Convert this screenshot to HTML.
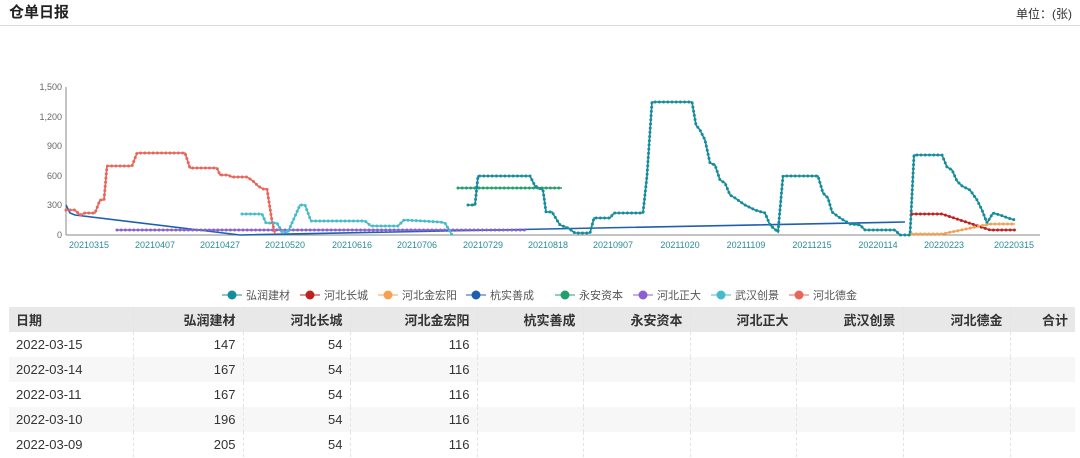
<!DOCTYPE html><html><head><meta charset="utf-8"><style>
body{margin:0;width:1080px;height:458px;overflow:hidden;background:#fff;font-family:"Liberation Sans","Noto Sans CJK SC",sans-serif;color:#333;position:relative}
.t{position:absolute;left:9px;top:1px;font-size:15px;font-weight:bold;color:#222}
.u{position:absolute;right:8px;top:5px;font-size:12px;color:#333}
.hr{position:absolute;left:0;top:25px;width:1080px;height:1px;background:#ddd}
svg{position:absolute;left:0;top:0}
table{position:absolute;left:9px;top:307px;border-collapse:collapse;font-size:13px}
td{height:25px;padding:0 7px;border-left:1px dashed #e3e3e3;text-align:right;box-sizing:border-box}
td:first-child{text-align:left;border-left:none}
tr.h td{background:#e8e8e8;font-weight:bold}
tr:nth-child(odd):not(.h) td{background:#f7f7f7}
.d polyline{stroke-dasharray:0 4.2;stroke-linecap:round;stroke-width:3}
</style></head><body>
<div class="t">仓单日报</div><div class="u">单位：(张)</div><div class="hr"></div>
<svg width="1080" height="305" font-family="Liberation Sans,Noto Sans CJK SC,sans-serif">
<g font-size="9" fill="#666" text-anchor="end">
<text x="62" y="90">1,500</text><text x="62" y="120">1,200</text><text x="62" y="149">900</text><text x="62" y="179">600</text><text x="62" y="208">300</text><text x="62" y="238">0</text></g>
<line x1="66" y1="87" x2="66" y2="235" stroke="#888"/><line x1="66" y1="235" x2="1040" y2="235" stroke="#888"/>
<g font-size="9" fill="#2a8a9a" text-anchor="middle">
<text x="89" y="248">20210315</text><text x="155" y="248">20210407</text><text x="220" y="248">20210427</text><text x="285" y="248">20210520</text><text x="352" y="248">20210616</text><text x="417" y="248">20210706</text><text x="483" y="248">20210729</text><text x="548" y="248">20210818</text><text x="613" y="248">20210907</text><text x="680" y="248">20211020</text><text x="746" y="248">20211109</text><text x="812" y="248">20211215</text><text x="878" y="248">20220114</text><text x="944" y="248">20220223</text><text x="1014" y="248">20220315</text></g>
<defs>
<polyline id="p1" points="117,230 525,230"/>
<polyline id="p2" points="66,205 70,213 75,215 240,235 905,222"/>
<polyline id="p3" points="66,210 75,210 80,215 85,213 95,213 100,200 104,200 107,166 132,166 137,153 185,153 190,168 217,168 220,175 228,175 232,177 247,177 253,181 258,186 263,189 267,189 272,221 275,234"/>
<polyline id="p4" points="242,214 262,214 266,223 277,223 282,232 288,232 300,205 305,205 311,221 365,221 371,226 398,226 404,220 440,222 445,223 452,235"/>
<polyline id="p5" points="458,188 562,188"/>
<polyline id="p6" points="468,205 475,205 478,176 530,176 535,186 543,190 546,212 552,212 560,225 568,228 575,233 590,233 594,218 610,218 614,213 643,213 647,176 652,102 692,102 696,125 700,130 705,140 710,163 715,165 720,180 725,183 730,195 735,198 745,205 755,210 765,213 770,225 778,232 783,176 818,176 823,193 828,198 832,212 840,218 850,224 860,225 865,230 895,230 900,235 910,235 914,155 942,155 947,167 952,170 957,181 962,186 970,190 977,200 982,210 987,223 993,213 1000,215 1008,218 1015,220"/>
<polyline id="p7" points="912,214 942,214 990,230 1015,230"/>
<polyline id="p8" points="912,234 942,234 990,224 1015,224"/>
</defs>
<g fill="none" stroke-width="1.6">
<use href="#p1" stroke="#8b5fd0"/><use href="#p2" stroke="#1f5fb0"/><use href="#p3" stroke="#e8655a"/><use href="#p4" stroke="#45bccc"/><use href="#p5" stroke="#22a06a"/><use href="#p6" stroke="#158c9c"/><use href="#p7" stroke="#c0201f"/><use href="#p8" stroke="#f7a050"/>
</g>
<g fill="none" stroke-dasharray="0 4.2" stroke-linecap="round" stroke-width="3">
<use href="#p1" stroke="#8b5fd0"/><use href="#p3" stroke="#e8655a"/><use href="#p4" stroke="#45bccc"/><use href="#p5" stroke="#22a06a"/><use href="#p6" stroke="#158c9c"/><use href="#p7" stroke="#c0201f"/><use href="#p8" stroke="#f7a050"/>
</g>
<g font-size="11" fill="#555">
<line x1="222" y1="295" x2="242" y2="295" stroke="#158c9c"/><circle cx="232" cy="295" r="4.5" fill="#158c9c"/><text x="246" y="299">弘润建材</text>
<line x1="300" y1="295" x2="320" y2="295" stroke="#c0201f"/><circle cx="310" cy="295" r="4.5" fill="#c0201f"/><text x="324" y="299">河北长城</text>
<line x1="378" y1="295" x2="398" y2="295" stroke="#f7a050"/><circle cx="388" cy="295" r="4.5" fill="#f7a050"/><text x="402" y="299">河北金宏阳</text>
<line x1="466" y1="295" x2="486" y2="295" stroke="#1f5fb0"/><circle cx="476" cy="295" r="4.5" fill="#1f5fb0"/><text x="490" y="299">杭实善成</text>
<line x1="555" y1="295" x2="575" y2="295" stroke="#22a06a"/><circle cx="565" cy="295" r="4.5" fill="#22a06a"/><text x="579" y="299">永安资本</text>
<line x1="633" y1="295" x2="653" y2="295" stroke="#8b5fd0"/><circle cx="643" cy="295" r="4.5" fill="#8b5fd0"/><text x="657" y="299">河北正大</text>
<line x1="711" y1="295" x2="731" y2="295" stroke="#45bccc"/><circle cx="721" cy="295" r="4.5" fill="#45bccc"/><text x="735" y="299">武汉创景</text>
<line x1="789" y1="295" x2="809" y2="295" stroke="#e8655a"/><circle cx="799" cy="295" r="4.5" fill="#e8655a"/><text x="813" y="299">河北德金</text>
</g></svg>
<table>
<colgroup><col style="width:124px"><col style="width:110px"><col style="width:107px"><col style="width:127px"><col style="width:106px"><col style="width:107px"><col style="width:106px"><col style="width:107px"><col style="width:107px"><col style="width:65px"></colgroup>
<tr class="h"><td>日期</td><td>弘润建材</td><td>河北长城</td><td>河北金宏阳</td><td>杭实善成</td><td>永安资本</td><td>河北正大</td><td>武汉创景</td><td>河北德金</td><td>合计</td></tr>
<tr><td>2022-03-15</td><td>147</td><td>54</td><td>116</td><td></td><td></td><td></td><td></td><td></td><td></td></tr>
<tr><td>2022-03-14</td><td>167</td><td>54</td><td>116</td><td></td><td></td><td></td><td></td><td></td><td></td></tr>
<tr><td>2022-03-11</td><td>167</td><td>54</td><td>116</td><td></td><td></td><td></td><td></td><td></td><td></td></tr>
<tr><td>2022-03-10</td><td>196</td><td>54</td><td>116</td><td></td><td></td><td></td><td></td><td></td><td></td></tr>
<tr><td>2022-03-09</td><td>205</td><td>54</td><td>116</td><td></td><td></td><td></td><td></td><td></td><td></td></tr>
</table>
</body></html>
